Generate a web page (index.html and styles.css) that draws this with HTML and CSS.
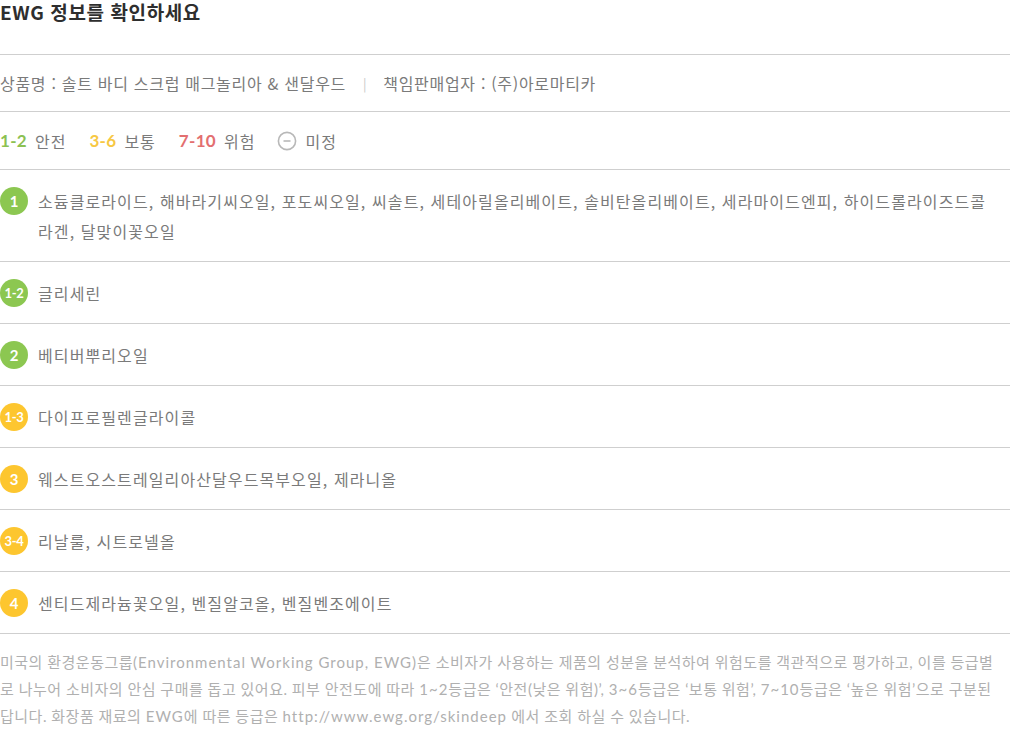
FILE: index.html
```html
<!DOCTYPE html>
<html lang="ko">
<head>
<meta charset="utf-8">
<title>EWG 정보</title>
<link rel="stylesheet" href="styles.css">
</head>
<body>
<div class="ewg">
  <h2 class="ewg-title">EWG 정보를 확인하세요</h2>
  <div class="row product">
    <span>상품명 : 솔트 바디 스크럽 매그놀리아 &amp; 샌달우드</span>
    <span class="sep">|</span>
    <span>책임판매업자 : (주)아로마티카</span>
  </div>
  <div class="row legend">
    <span class="lg"><b class="num green">1-2</b>안전</span>
    <span class="lg"><b class="num yellow">3-6</b>보통</span>
    <span class="lg"><b class="num red">7-10</b>위험</span>
    <span class="lg"><svg class="undef" width="20" height="20" viewBox="0 0 20 20"><circle cx="10" cy="10" r="8.6" fill="none" stroke="#b8b8b8" stroke-width="1.6"/><line x1="6.5" y1="10" x2="13.5" y2="10" stroke="#b8b8b8" stroke-width="1.6"/></svg>미정</span>
  </div>
  <ul class="grades">
    <li class="row grade"><span class="badge green">1</span><p>소듐클로라이드, 해바라기씨오일, 포도씨오일, 씨솔트, 세테아릴올리베이트, 솔비탄올리베이트, 세라마이드엔피, 하이드롤라이즈드콜라겐, 달맞이꽃오일</p></li>
    <li class="row grade"><span class="badge green small">1-2</span><p>글리세린</p></li>
    <li class="row grade"><span class="badge green">2</span><p>베티버뿌리오일</p></li>
    <li class="row grade"><span class="badge yellow small">1-3</span><p>다이프로필렌글라이콜</p></li>
    <li class="row grade"><span class="badge yellow">3</span><p>웨스트오스트레일리아산달우드목부오일, 제라니올</p></li>
    <li class="row grade"><span class="badge yellow small">3-4</span><p>리날룰, 시트로넬올</p></li>
    <li class="row grade"><span class="badge yellow">4</span><p>센티드제라늄꽃오일, 벤질알코올, 벤질벤조에이트</p></li>
  </ul>
  <p class="note">미국의 환경운동그룹<span class="en">(Environmental Working Group, EWG)</span>은 소비자가 사용하는 제품의 성분을 분석하여 위험도를 객관적으로 평가하고, 이를 등급별<br>로 나누어 소비자의 안심 구매를 돕고 있어요. 피부 안전도에 따라 <span class="en">1~2</span>등급은 ‘안전(낮은 위험)’, <span class="en">3~6</span>등급은 ‘보통 위험’, <span class="en">7~10</span>등급은 ‘높은 위험’으로 구분된<br>답니다. 화장품 재료의 <span class="en">EWG</span>에 따른 등급은 <span class="en">http://www.ewg.org/skindeep</span> 에서 조회 하실 수 있습니다.</p>
</div>
</body>
</html>
```

FILE: styles.css
```css
* { box-sizing: border-box; }
html, body { margin: 0; padding: 0; background: #fff; }
body {
  font-family: "Noto Sans CJK KR", "Noto Sans", sans-serif;
  color: #7a7a7a;
  font-size: 16px;
}
.ewg { width: 1010px; }
.ewg-title {
  margin: 0;
  height: 55px;
  font-size: 19px;
  line-height: 24px;
  font-weight: 700;
  letter-spacing: 0.6px;
  color: #2e2e2e;
  border-bottom: 1px solid #cfcfcf;
}
.row {
  border-bottom: 1px solid #cfcfcf;
  display: flex;
  align-items: center;
}
.product {
  height: 57px;
  font-size: 16px;
  letter-spacing: 0.7px;
}
.product .sep {
  color: #c8c8c8;
  font-size: 13px;
  margin: 0 16px 0 17px;
}
.legend {
  height: 58px;
  gap: 23px;
  letter-spacing: 1px;
}
.lg { display: inline-flex; align-items: center; gap: 8px; }
.num {
  font-family: "Lato", "Noto Sans", sans-serif;
  font-weight: 700;
  font-size: 17px;
  letter-spacing: 0.3px;
}
.num.green { color: #8cc152; }
.num.yellow { color: #f7c843; }
.num.red { color: #e36f70; }
.undef { display: block; margin-left: -1px; }
.grades { list-style: none; margin: 0; padding: 0; }
.grade {
  align-items: flex-start;
  padding: 16px 0 15px;
  gap: 10px;
}
.grade p {
  margin: 0;
  line-height: 30px;
  letter-spacing: 1.1px;
  padding-right: 15px;
  flex: 1;
}
.badge {
  flex: none;
  width: 28px;
  height: 28px;
  margin-top: 1px;
  border-radius: 50%;
  color: #fff;
  font-family: "Lato", "Noto Sans", sans-serif;
  font-weight: 700;
  font-size: 15px;
  display: flex;
  align-items: center;
  justify-content: center;
}
.badge.small { font-size: 13px; letter-spacing: -0.3px; }
.badge.green { background: #8cc751; }
.badge.yellow { background: #fdc62f; }
.note {
  margin: 0;
  padding-top: 15px;
  font-family: "Lato", "Noto Sans CJK KR", sans-serif;
  font-size: 15px;
  line-height: 27px;
  letter-spacing: 0.5px;
  color: #b0b0b0;
  white-space: nowrap;
}
.note .en { letter-spacing: 1px; }
```
